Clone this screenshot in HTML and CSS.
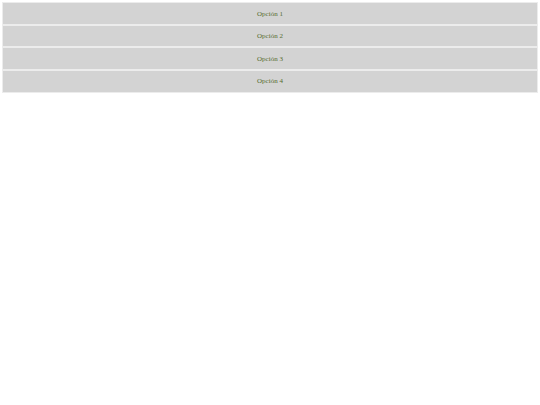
FILE: index.html
```html
<!DOCTYPE html>
<html>
<head>
<meta charset="utf-8">
<link rel="stylesheet" href="styles.css">
</head>
<body>
<div class="menu">
  <div class="item">Opción 1</div>
  <div class="item">Opción 2</div>
  <div class="item">Opción 3</div>
  <div class="item">Opción 4</div>
</div>
</body>
</html>
```
FILE: styles.css
```css
html, body {
  background: #ffffff;
}
body {
  margin: 2px;
  font-family: "Liberation Serif", "Times New Roman", serif;
}
.menu {
  display: flex;
  flex-direction: column;
}
.item {
  background: #d3d3d3;
  border: 1px solid #ececec;
  color: #556b2f;
  font-size: 7px;
  line-height: 9px;
  padding: 6.5px 0 5.17px;
  text-align: center;
}
```
